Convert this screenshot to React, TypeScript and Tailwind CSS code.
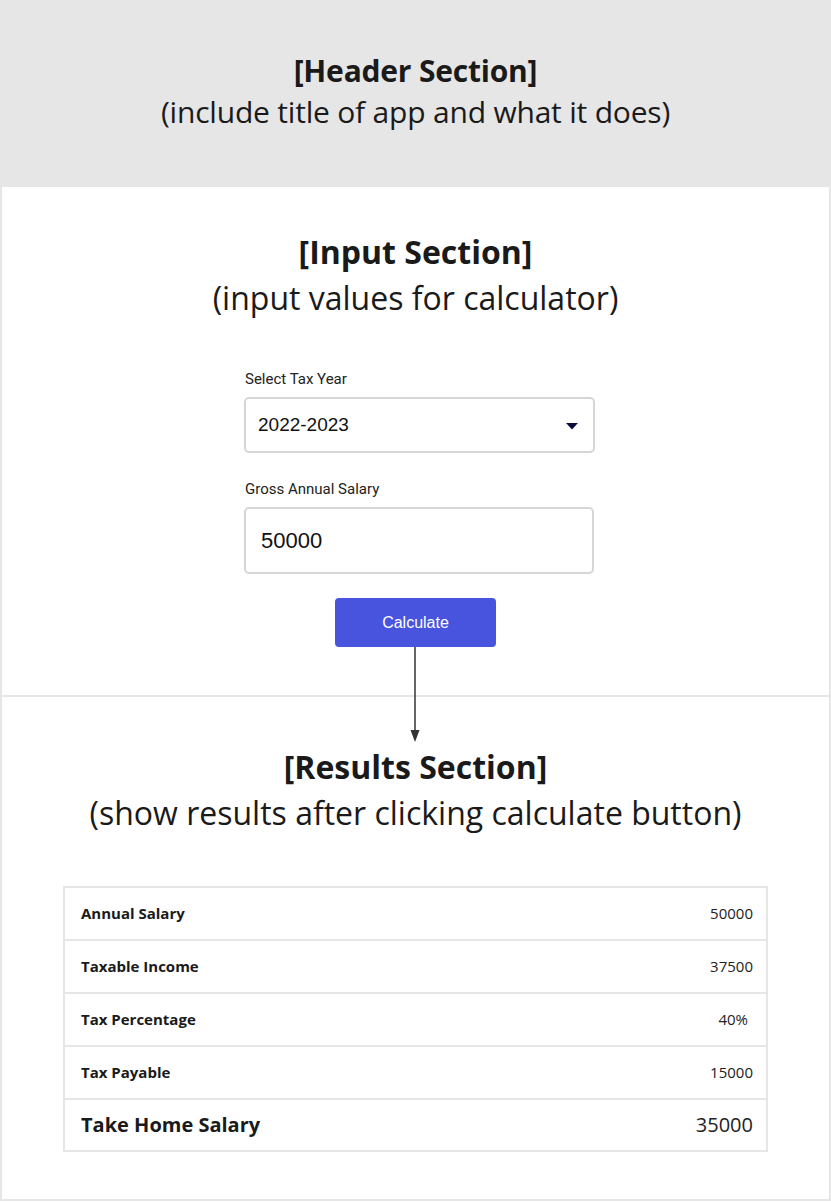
import { useState } from 'react'

const rows = [
  { label: 'Annual Salary', value: '50000' },
  { label: 'Taxable Income', value: '37500' },
  { label: 'Tax Percentage', value: '40%' },
  { label: 'Tax Payable', value: '15000' },
]

export default function App() {
  const [year, setYear] = useState('2022-2023')
  const [salary, setSalary] = useState('50000')

  return (
    <div className="min-h-[1202px] w-[831px] bg-white text-[#1a1a1a]" style={{ fontFamily: '"Open Sans", sans-serif' }}>
      {/* Header */}
      <header className="h-[187px] bg-[#e6e6e6] flex flex-col items-center justify-center pb-[6px] text-center">
        <h1 className="text-[30px] leading-[41px] font-bold tracking-[-0.2px]">[Header Section]</h1>
        <p className="text-[30px] leading-[41px] tracking-[-0.2px]">(include title of app and what it does)</p>
      </header>

      <div className="border-x-2 border-b-2 border-[#e6e6e6]">
        {/* Input section */}
        <section className="relative h-[510px] pt-[42px] border-b-2 border-[#e6e6e6] text-center">
          <h2 className="text-[32px] leading-[45px] font-bold">[Input Section]</h2>
          <p className="text-[32px] leading-[47px]">(input values for calculator)</p>

          <div className="flex justify-center pl-2 mt-[48px]">
            <div className="w-[351px] text-left" style={{ fontFamily: 'Roboto, sans-serif' }}>
              <label className="block text-[15px] leading-[20px] text-[#222] pl-[1px]">Select Tax Year</label>
              <div className="relative mt-[8px] h-[56px] border-2 border-[#d6d6d6] rounded-[5px] bg-white">
                <select
                  value={year}
                  onChange={(e) => setYear(e.target.value)}
                  className="appearance-none w-full h-full pl-[12px] bg-transparent text-[19px] text-[#111] outline-none"
                  style={{ fontFamily: '"Liberation Sans", Arial, sans-serif' }}
                >
                  <option>2022-2023</option>
                  <option>2021-2022</option>
                </select>
                <svg className="absolute right-[15px] top-[24px] pointer-events-none" width="12" height="7" viewBox="0 0 12 7">
                  <path d="M0 0 H12 L6 6.5 Z" fill="#0b0b3e" />
                </svg>
              </div>

              <label className="block text-[15px] leading-[20px] text-[#222] mt-[26px] pl-[1px]">Gross Annual Salary</label>
              <input
                value={salary}
                onChange={(e) => setSalary(e.target.value)}
                className="block mt-[8px] w-[350px] h-[67px] pl-[15px] border-2 border-[#d6d6d6] rounded-[5px] text-[22px] text-[#111] outline-none"
                style={{ fontFamily: '"Liberation Sans", Arial, sans-serif' }}
              />
            </div>
          </div>

          <div className="relative w-[161px] mx-auto mt-[24px]">
            <button
              className="w-[161px] h-[49px] rounded-[4px] bg-[#4854dd] text-white text-[16px]"
              style={{ fontFamily: '"Liberation Sans", Arial, sans-serif' }}
            >
              Calculate
            </button>
            {/* connector arrow */}
            <svg className="absolute left-[75px] top-[49px]" width="10" height="96" viewBox="0 0 10 96">
              <line x1="5" y1="0" x2="5" y2="84" stroke="#333" strokeWidth="1.5" />
              <path d="M0.5 83 H9.5 L5 95 Z" fill="#333" />
            </svg>
          </div>
        </section>

        {/* Results section */}
        <section className="h-[502px] pt-[47px] text-center">
          <h2 className="text-[32px] leading-[45px] font-bold">[Results Section]</h2>
          <p className="text-[32px] leading-[47px]">(show results after clicking calculate button)</p>

          <div className="mt-[50px] w-[705px] ml-[61px] border-2 border-[#e6e6e6] text-left">
            {rows.map((r) => (
              <div key={r.label} className="flex items-center justify-between h-[53px] border-b-2 border-[#e6e6e6] pl-[16px] pr-[13px]">
                <span className="text-[15px] font-bold text-[#1a1a1a]">{r.label}</span>
                <span className={`text-[15px] text-[#222] ${r.value === '40%' ? 'mr-[5px]' : ''}`}>{r.value}</span>
              </div>
            ))}
            <div className="flex items-center justify-between h-[50px] pl-[16px] pr-[13px]">
              <span className="text-[20px] font-bold text-[#1a1a1a]">Take Home Salary</span>
              <span className="text-[20px] text-[#222]">35000</span>
            </div>
          </div>
        </section>
      </div>
    </div>
  )
}
